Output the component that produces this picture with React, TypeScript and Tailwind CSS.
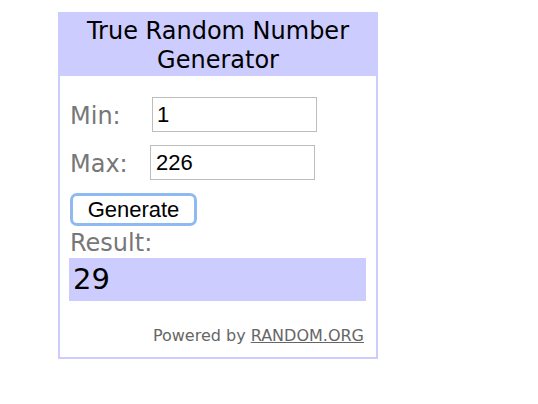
import * as React from 'react'

export default function App() {
  const [min] = React.useState('1')
  const [max] = React.useState('226')
  const result = 29

  return (
    <div className="min-h-[404px] w-[538px] bg-white pl-[58px] pt-[12px]">
      <div className="w-[320px] border-2 border-[#ccccff] bg-white font-['DejaVu_Sans',Verdana,sans-serif]">
        {/* Header */}
        <div className="bg-[#ccccff] pt-[3px] pb-[1px] text-center text-[24px] leading-[29px] text-black">
          True Random Number
          <br />
          Generator
        </div>

        <div className="pl-[10px] pr-[10px] pt-[21px]">
          {/* Min */}
          <div className="flex items-center">
            <span className="w-[82px] pt-[2px] text-[24px] leading-[28px] text-[#777]">Min:</span>
            <input
              type="text"
              defaultValue={min}
              className="h-[35px] w-[165px] border border-[#bdbdbd] px-[4px] font-['Liberation_Sans',Arial,sans-serif] text-[22px] text-black outline-none"
            />
          </div>

          {/* Max */}
          <div className="mt-[13px] flex items-center">
            <span className="w-[80px] pt-[2px] text-[24px] leading-[28px] text-[#777]">Max:</span>
            <input
              type="text"
              defaultValue={max}
              className="h-[35px] w-[165px] border border-[#bdbdbd] px-[5px] font-['Liberation_Sans',Arial,sans-serif] text-[22px] text-black outline-none"
            />
          </div>

          {/* Generate */}
          <button className="mt-[13px] flex h-[33px] w-[127px] items-center justify-center rounded-[7px] border-[3px] border-[#8fb9f2] bg-white font-['Liberation_Sans',Arial,sans-serif] text-[22px] leading-none text-black">
            Generate
          </button>

          <div className="mt-[3px] h-[28px] text-[24px] leading-[28px] text-[#777]">Result:</div>

          <div className="-ml-[1px] mt-[1px] h-[43px] bg-[#ccccff] pl-[4px] text-[29px] leading-[43px] text-black">
            {result}
          </div>

          <div className="mt-[25px] pb-[11px] pr-[2px] text-right text-[16px] leading-[20px] text-[#666]">
            Powered by <span className="underline">RANDOM.ORG</span>
          </div>
        </div>
      </div>
    </div>
  )
}
